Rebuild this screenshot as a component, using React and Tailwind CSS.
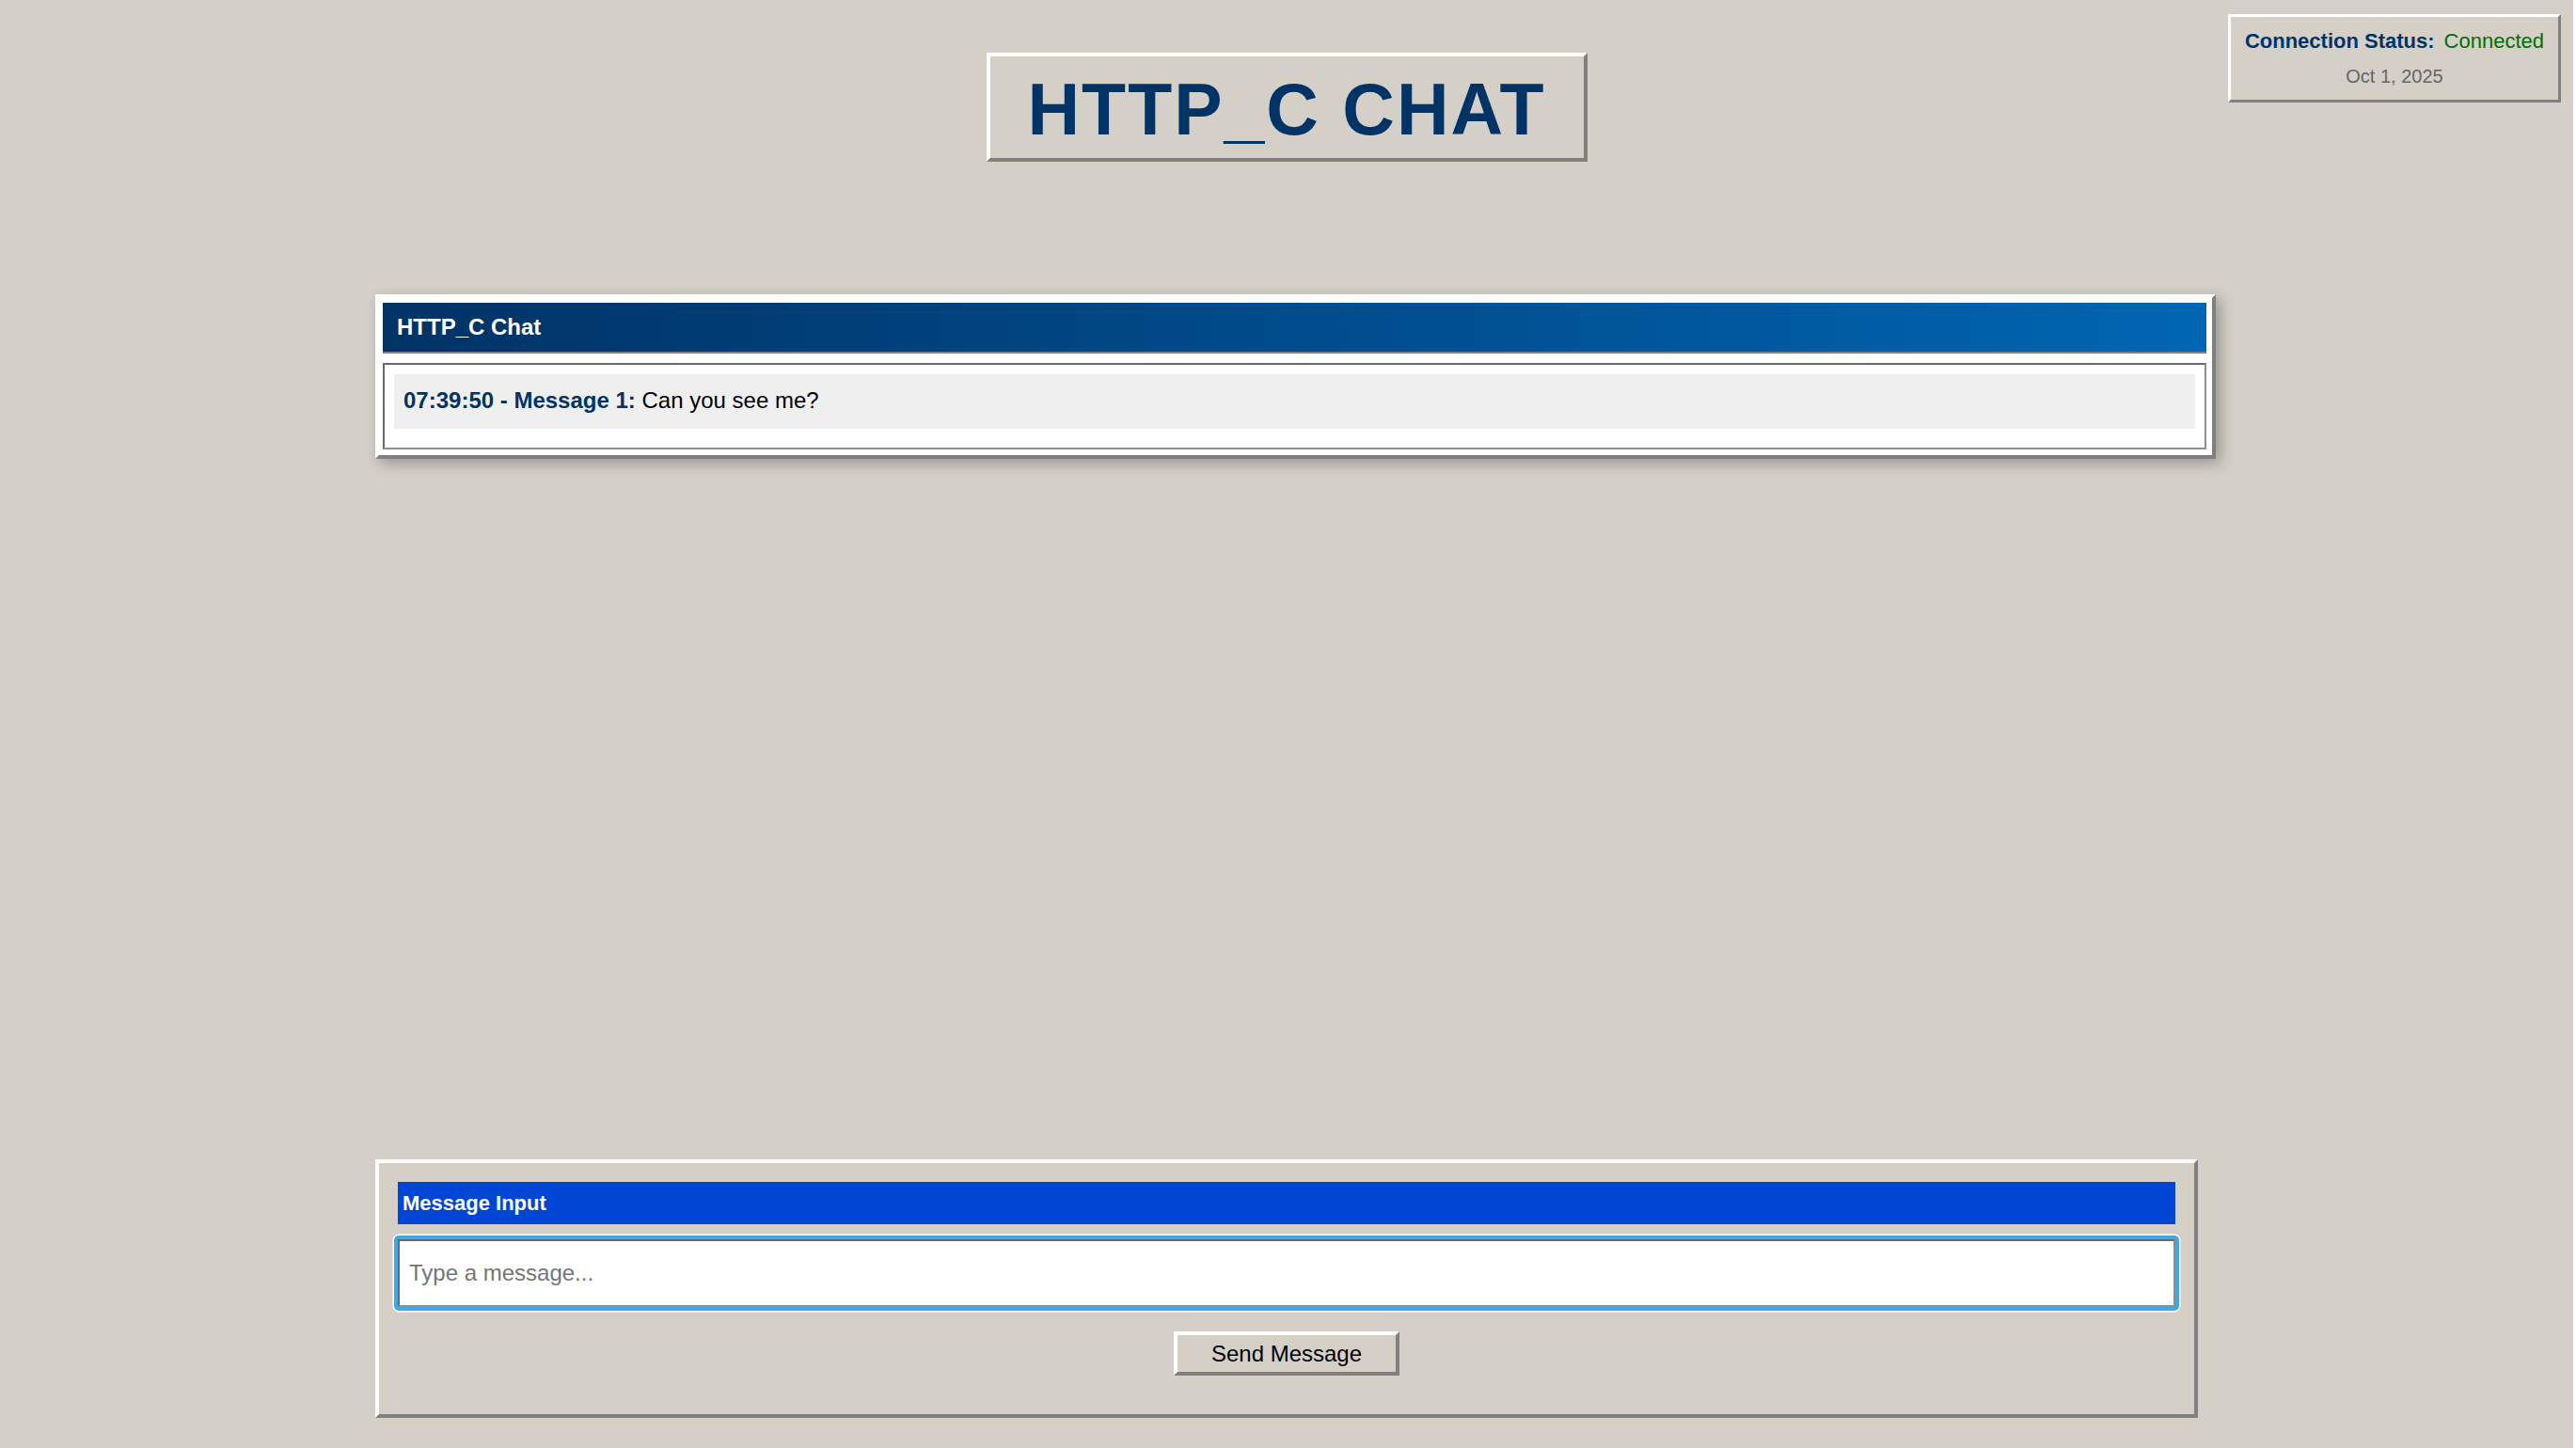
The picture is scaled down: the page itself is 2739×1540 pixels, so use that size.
import { useState } from 'react';

const FONT = "font-['Liberation_Sans',Arial,sans-serif]";

const messages = [
  { id: 1, time: '07:39:50', text: 'Can you see me?' },
];

function StatusBadge() {
  return (
    <div className="absolute top-[15px] right-[13px] border-[3px] border-t-white border-l-white border-r-[#808080] border-b-[#808080] bg-[#d4d0c8] px-[15px] pt-[13px] pb-[13px] text-center">
      <div className="flex items-center justify-center gap-[10px] text-[22px] leading-[25px]">
        <span className="font-bold text-[#003366]">Connection Status:</span>
        <span className="text-[#006f00]">Connected</span>
      </div>
      <div className="mt-[14px] text-[20px] leading-[23px] text-[#666]">Oct 1, 2025</div>
    </div>
  );
}

function ChatPanel() {
  return (
    <div className="w-[1957px] border-4 border-t-white border-l-white border-r-[#808080] border-b-[#808080] bg-white pt-[5px] pl-[4px] pr-[6px] pb-[6px] shadow-[5px_5px_14px_rgba(0,0,0,0.28)]">
      <div className="border-b-2 border-[#808080] bg-gradient-to-r from-[#003366] to-[#0066b3] px-[15px] py-[12px] text-[24px] leading-[28px] font-bold text-white">
        HTTP_C Chat
      </div>
      <div className="mt-[10px] border-2 border-t-[#6a6a6a] border-l-[#6a6a6a] border-r-[#8f8f8f] border-b-[#8f8f8f] bg-white p-[10px]">
        {messages.map(m => (
          <div key={m.id} className="mb-[10px] bg-[#efefef] px-[10px] pt-[14px] pb-[16px] text-[24px] leading-[28px] text-black">
            <span className="font-bold text-[#003366]">{m.time} - Message {m.id}:</span> {m.text}
          </div>
        ))}
      </div>
    </div>
  );
}

function InputPanel() {
  const [value, setValue] = useState('');
  return (
    <div className="border-4 border-t-white border-l-white border-r-[#808080] border-b-[#808080] bg-[#d4d0c8] px-[20px] pt-[20px] pb-[41px]">
      <div className="bg-[#0046d5] px-[5px] py-[10px] text-[22px] leading-[25px] font-bold text-white">
        Message Input
      </div>
      <div className="-mx-[4px] mt-[12px] rounded-[5px] bg-[#3ea9e6] p-[4px] ring-[1.5px] ring-white">
        <input
          value={value}
          onChange={e => setValue(e.target.value)}
          placeholder="Type a message..."
          className="block w-full border-2 border-t-[#6a6a6a] border-l-[#6a6a6a] border-r-[#8f8f8f] border-b-[#8f8f8f] bg-white px-[10px] py-[20px] text-[24px] leading-[28px] text-black outline-none placeholder:text-[#757575]"
        />
      </div>
      <div className="mt-[22px] flex justify-center">
        <button className="w-[240px] border-4 border-t-white border-l-white border-r-[#808080] border-b-[#808080] bg-[#d4d0c8] pt-[6px] pb-[5px] text-[24px] leading-[28px] text-black">
          Send Message
        </button>
      </div>
    </div>
  );
}

export default function App() {
  return (
    <div className={`${FONT} relative flex h-screen w-[2736px] flex-col overflow-hidden bg-[#d4d0c8]`}>
      <StatusBadge />
      <h1 className="mt-[56px] self-center border-4 border-t-white border-l-white border-r-[#808080] border-b-[#808080] bg-[#d4d0c8] px-[40px] pt-[12px] pb-[8px] text-[77px] leading-[88px] font-bold tracking-[2px] text-[#003366]">
        HTTP_C CHAT
      </h1>
      <div className="mx-auto mt-[141px] flex w-[1938px] flex-1 flex-col">
        <ChatPanel />
        <div className="mt-auto mb-[32px]">
          <InputPanel />
        </div>
      </div>
    </div>
  );
}
